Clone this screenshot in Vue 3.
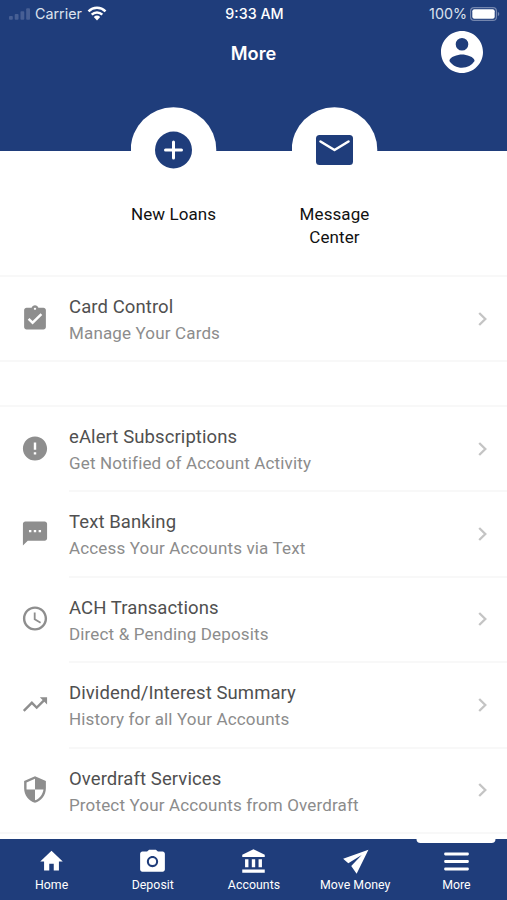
<script setup>
const shortcuts = [
  { label: 'New Loans', icon: 'plus' },
  { label: 'Message Center', icon: 'mail' },
]

const cardItem = {
  title: 'Card Control',
  text: 'Manage Your Cards',
  icon: 'M19 3h-4.18C14.4 1.84 13.3 1 12 1s-2.4.84-2.82 2H5c-1.1 0-2 .9-2 2v14c0 1.1.9 2 2 2h14c1.1 0 2-.9 2-2V5c0-1.1-.9-2-2-2zm-7 0c.55 0 1 .45 1 1s-.45 1-1 1-1-.45-1-1 .45-1 1-1zm-2 14-4-4 1.41-1.41L10 14.17l6.59-6.59L18 9l-8 8z',
}

const services = [
  {
    title: 'eAlert Subscriptions',
    text: 'Get Notified of Account Activity',
    icon: 'M12 2C6.48 2 2 6.48 2 12s4.48 10 10 10 10-4.48 10-10S17.52 2 12 2zm1 15h-2v-2h2v2zm0-4h-2V7h2v6z',
  },
  {
    title: 'Text Banking',
    text: 'Access Your Accounts via Text',
    icon: 'M20 2H4c-1.1 0-1.99.9-1.99 2L2 22l4-4h14c1.1 0 2-.9 2-2V4c0-1.1-.9-2-2-2zM9 11H7V9h2v2zm4 0h-2V9h2v2zm4 0h-2V9h2v2z',
  },
  {
    title: 'ACH Transactions',
    text: 'Direct & Pending Deposits',
    icon: 'M11.99 2C6.47 2 2 6.48 2 12s4.47 10 9.99 10C17.52 22 22 17.52 22 12S17.52 2 11.99 2zM12 20c-4.42 0-8-3.58-8-8s3.58-8 8-8 8 3.58 8 8-3.58 8-8 8zm.5-13H11v6l5.25 3.15.75-1.23-4.5-2.67z',
  },
  {
    title: 'Dividend/Interest Summary',
    text: 'History for all Your Accounts',
    icon: 'M16 6l2.29 2.29-4.88 4.88-4-4L2 16.59 3.41 18l6-6 4 4 6.3-6.29L22 12V6z',
  },
  {
    title: 'Overdraft Services',
    text: 'Protect Your Accounts from Overdraft',
    icon: 'M12 1L3 5v6c0 5.55 3.84 10.74 9 12 5.16-1.26 9-6.45 9-12V5l-9-4zm0 10.99h7c-.53 4.12-3.28 7.79-7 8.94V12H5V6.3l7-3.11v8.8z',
  },
]

const groups = [[cardItem], services]

const tabs = [
  { label: 'Home', icon: 'M10 20v-6h4v6h4.600v-8H22L12 2.500 2 12h3.400v8z' },
  {
    label: 'Deposit',
    icon: 'M12 8.800a3.200 3.200 0 1 0 0 6.400 3.200 3.200 0 0 0 0-6.400zM9 1.500 7.170 3.200H3c-1.100 0-2 .9-2 2v13.800c0 1.100.9 2 2 2h18c1.100 0 2-.9 2-2V5.200c0-1.100-.9-2-2-2h-4.170L15 1.500H9zm3 15.500c-2.760 0-5-2.240-5-5s2.240-5 5-5 5 2.240 5 5-2.240 5-5 5z',
  },
  {
    label: 'Accounts',
    icon: 'M4.500 10v7h3v-7h-3zm6 0v7h3v-7h-3zM2 22h20v-3H2v3zm14.500-12v7h3v-7h-3zM12 1 2 6v2h20V6L12 1z',
  },
  { label: 'Move Money', icon: 'M23.500 1.500 1 9.600 5.600 13.600 17.500 6.200 8.200 16 13 22.800z' },
  { label: 'More', icon: 'M2 4h20q1 0 1 1.300t-1 1.300h-20q-1 0-1-1.300t1-1.300zM2 10.700h20q1 0 1 1.300t-1 1.300h-20q-1 0-1-1.300t1-1.300zM2 17.400h20q1 0 1 1.300t-1 1.300h-20q-1 0-1-1.300t1-1.300z', active: true },
]
</script>

<template>
  <div class="screen">
    <header class="header">
      <div class="status">
        <div class="carrier">
          <svg class="signal" viewBox="0 0 22 14">
            <rect x="0" y="9" width="4" height="4" rx="1" />
            <rect x="6" y="7" width="4" height="6" rx="1" />
            <rect x="12" y="4" width="4" height="9" rx="1" />
            <rect x="18" y="1" width="4" height="12" rx="1" />
          </svg>
          <span>Carrier</span>
          <svg class="wifi" viewBox="0 0 20 15">
            <path d="M1.500 5.300a12.200 12.200 0 0 1 17 0M4.700 8.700a7.600 7.600 0 0 1 10.600 0" />
            <path class="wifi-dot" d="M6.800 11a4.800 4.800 0 0 1 6.400 0L10 14.500z" />
          </svg>
        </div>
        <div class="time">9:33 AM</div>
        <div class="battery">
          <span>100%</span>
          <svg class="cell" viewBox="0 0 30 14">
            <rect class="cell-edge" x=".6" y=".6" width="25.800" height="12.800" rx="3.500" />
            <rect class="cell-fill" x="2.300" y="2.300" width="22.400" height="9.400" rx="2" />
            <path class="cell-cap" d="M27.800 4.800c2 .8 2 3.600 0 4.400z" />
          </svg>
        </div>
      </div>
      <div class="titlebar">
        <h1>More</h1>
        <svg class="avatar" viewBox="2 2 20 20">
          <path d="M12 2C6.480 2 2 6.480 2 12s4.480 10 10 10 10-4.480 10-10S17.520 2 12 2zm0 3.300a3 3 0 1 1 0 6 3 3 0 0 1 0-6zm0 14.200c-2.500 0-4.710-1.280-6-3.220.03-1.990 4-3.080 6-3.080 1.990 0 5.970 1.090 6 3.080a7.200 7.200 0 0 1-6 3.220z" />
        </svg>
      </div>
    </header>

    <section class="shortcuts">
      <div v-for="s in shortcuts" :key="s.label" class="shortcut">
        <svg class="bubble" viewBox="0 0 86 86">
          <circle class="disc" cx="42.500" cy="43" r="42.800" />
          <template v-if="s.icon === 'plus'">
            <circle cx="42.500" cy="43" r="18.500" />
            <path class="cut" d="M42.500 35v16M34.500 43h16" />
          </template>
          <template v-else>
            <rect x="24" y="28" width="37" height="30" rx="3.500" />
            <path class="cut mail" d="M28.500 34.500 42.500 43l14-8.500" />
          </template>
        </svg>
        <div class="shortcut-label">{{ s.label }}</div>
      </div>
    </section>

    <main>
      <ul v-for="(group, i) in groups" :key="i" class="group">
        <li v-for="item in group" :key="item.title" class="item">
          <svg class="item-icon" viewBox="0 0 24 24"><path :d="item.icon" fill-rule="evenodd" /></svg>
          <div class="item-body">
            <div class="item-text">
              <div class="item-title">{{ item.title }}</div>
              <div class="item-sub">{{ item.text }}</div>
            </div>
            <svg class="chevron" viewBox="0 0 9 14"><path d="M1.200 1 7.300 7l-6.100 6" /></svg>
          </div>
        </li>
      </ul>
    </main>

    <nav class="tabs">
      <div v-for="t in tabs" :key="t.label" class="tab" :class="{ active: t.active }">
        <svg viewBox="0 0 24 24"><path :d="t.icon" /></svg>
        <span>{{ t.label }}</span>
      </div>
    </nav>
  </div>
</template>

<style>
body {
  margin: 0;
}
</style>

<style scoped>
.screen {
  display: flex;
  flex-direction: column;
  width: 507px;
  height: 900px;
  overflow: hidden;
  background: #fff;
  font-family: Roboto, sans-serif;
}

.header {
  flex: none;
  height: 151px;
  background: #1f3d7b;
  color: #fff;
}

.status {
  display: grid;
  grid-template-columns: 1fr auto 1fr;
  align-items: center;
  height: 27px;
  padding: 0 7px 0 9px;
  font: 14.300px/27px Inter, sans-serif;
}

.carrier,
.battery {
  display: flex;
  align-items: center;
  color: #dce2ee;
}

.signal {
  width: 21px;
  height: 14px;
  margin-right: 5px;
  fill: #475f94;
}

.wifi {
  width: 20px;
  height: 15px;
  margin-left: 5px;
  fill: none;
  stroke: #fff;
  stroke-width: 2.500;
}

.wifi-dot {
  fill: #fff;
  stroke: none;
}

.time {
  font-weight: 550;
}

.battery {
  justify-content: flex-end;
}

.cell {
  width: 30px;
  height: 14px;
  margin-left: 3px;
}

.cell-edge {
  fill: none;
  stroke: #7486ae;
  stroke-width: 1.200;
}

.cell-fill {
  fill: #fff;
}

.cell-cap {
  fill: #7486ae;
}

.titlebar {
  display: grid;
  grid-template-columns: 1fr auto 1fr;
  align-items: center;
  height: 50px;
  padding-right: 24px;
  padding-left: 24px;
}

h1 {
  grid-column: 2;
  margin: 0;
  padding-top: 2px;
  font: 600 18.200px/26px Inter, sans-serif;
}

.avatar {
  justify-self: end;
  width: 42px;
  height: 42px;
  fill: #fff;
}

.shortcuts {
  display: flex;
  flex: none;
  justify-content: center;
  gap: 61px;
  height: 168px;
  margin-top: -44px;
  padding-left: 1px;
}

.shortcut {
  display: flex;
  flex-direction: column;
  align-items: center;
  width: 100px;
}

.bubble {
  flex: none;
  width: 86px;
  height: 86px;
  fill: #1f3d7b;
}

.bubble .disc {
  fill: #fff;
}

.bubble .cut {
  fill: none;
  stroke: #fff;
  stroke-width: 3;
  stroke-linecap: round;
  stroke-linejoin: round;
}

.bubble .mail {
  stroke-width: 2.600;
}

.shortcut-label {
  margin-top: 10px;
  color: #111;
  font-size: 17px;
  letter-spacing: 0.08px;
  line-height: 23px;
  text-align: center;
}

main {
  flex: 1;
  min-height: 0;
}

.group {
  margin: 0 0 43px;
  padding: 0;
  border-top: 2px solid #f8f8f8;
  border-bottom: 2px solid #f8f8f8;
  list-style: none;
}

.item {
  display: flex;
  align-items: center;
  height: 85.500px;
  padding-left: 20px;
}

.item:first-child {
  height: 83px;
}

.item-icon {
  flex: none;
  width: 30px;
  height: 29px;
  margin-right: 19px;
  fill: #8e8e8e;
}

.item + .item .item-icon {
  margin-top: 1px;
}

.item-body {
  display: flex;
  box-sizing: border-box;
  flex: 1;
  align-items: center;
  justify-content: space-between;
  height: 100%;
  padding-right: 20px;
}

.item + .item .item-body {
  border-top: 2px solid #f8f8f8;
}

.item-text {
  padding-top: 3px;
}

.item-title {
  color: #505050;
  font-size: 18.500px;
  letter-spacing: 0.09px;
  line-height: 26px;
}

.item-sub {
  color: #8c8c8c;
  font-size: 17px;
  letter-spacing: 0.15px;
  line-height: 26px;
}

.chevron {
  width: 9px;
  height: 14px;
  fill: none;
  stroke: #c4c4c4;
  stroke-width: 2.300;
}

.tabs {
  z-index: 1;
  display: grid;
  flex: none;
  grid-template-columns: repeat(5, 1fr);
  height: 61px;
  padding-left: 1px;
  background: #1f3d7b;
}

.tab {
  position: relative;
  display: flex;
  flex-direction: column;
  align-items: center;
  min-width: 0;
  padding-top: 9px;
  color: #fff;
  font-size: 12.300px;
  letter-spacing: 0.05px;
  line-height: 20px;
}

.tab svg {
  width: 27px;
  height: 27px;
  fill: #fff;
}

.tab span {
  white-space: nowrap;
}

.tab.active::before {
  position: absolute;
  top: 0;
  left: 50%;
  width: 79px;
  height: 4px;
  border-radius: 0 0 4px 4px;
  background: #fff;
  content: '';
  transform: translateX(-50%);
}
</style>
